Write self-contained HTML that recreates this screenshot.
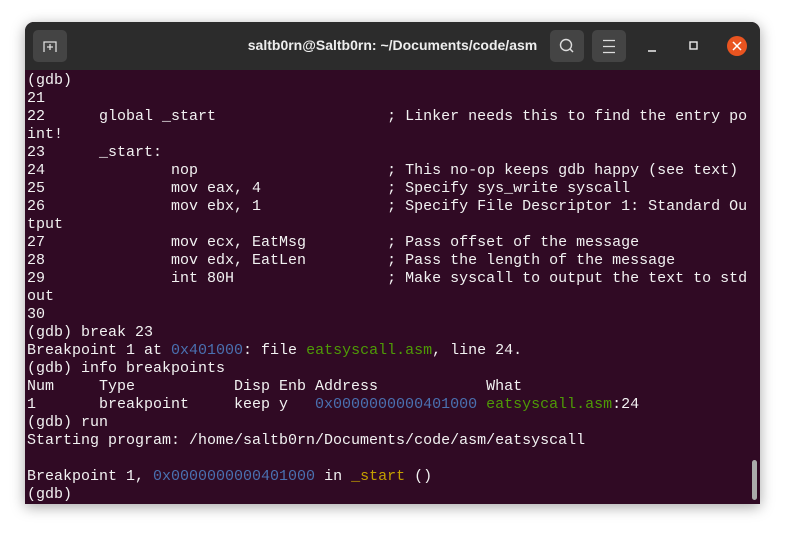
<!DOCTYPE html>
<html><head><style>
body{margin:0;width:786px;height:533px;background:#fff;overflow:hidden;position:relative;font-family:"Liberation Sans",sans-serif}
.win{position:absolute;left:25px;top:22px;width:735px;height:482px;border-radius:9px 9px 0 0;overflow:hidden;box-shadow:0 3px 14px rgba(0,0,0,.35);background:#300a24}
.tb{position:absolute;left:0;top:0;width:735px;height:48px;background:#2c2c2c;}
.btn{position:absolute;top:8px;width:34px;height:32px;border-radius:5px;background:#444}
.title{position:absolute;left:0;width:735px;top:15px;text-align:center;color:#eee;font-weight:bold;font-size:14px}
pre{position:absolute;left:2px;top:50px;margin:0;font-family:"Liberation Mono",monospace;font-size:15px;line-height:18px;color:#f2f2f2;letter-spacing:0}
.b{color:#4a70b0}.g{color:#4e9a06}.y{color:#c4a000}
.sb{position:absolute;right:3px;top:438px;width:5px;height:40px;border-radius:3px;background:#aaa}
</style></head><body>
<div class="win">
<div class="tb">
<div class="btn" style="left:8px"><svg width="34" height="32"><path d="M11 22V12h12v10M17 14v6M14 17h6" stroke="#ddd" stroke-width="1.3" fill="none"/></svg></div>
<div class="title">saltb0rn@Saltb0rn: ~/Documents/code/asm</div>
<div class="btn" style="left:525px"><svg width="34" height="32"><circle cx="16" cy="15" r="5.5" stroke="#ddd" stroke-width="1.4" fill="none"/><path d="M20 19l3 3" stroke="#ddd" stroke-width="1.5"/></svg></div>
<div class="btn" style="left:567px"><svg width="34" height="32"><path d="M11 10.5h12M11 16.5h12M11 22.5h12" stroke="#ddd" stroke-width="1.2"/></svg></div>
<svg style="position:absolute;left:620px;top:12px" width="110" height="26"><path d="M3 17h8" stroke="#eee" stroke-width="1.5"/><rect x="45" y="8" width="7" height="7" stroke="#eee" stroke-width="1.4" fill="none"/><circle cx="92" cy="12" r="10" fill="#e95420"/><path d="M88 8l8 8M96 8l-8 8" stroke="#fff" stroke-width="1.5"/></svg>
</div>
<pre>(gdb) 
21	
22	global _start			; Linker needs this to find the entry po
int!
23	_start:
24		nop			; This no-op keeps gdb happy (see text)
25		mov eax, 4		; Specify sys_write syscall
26		mov ebx, 1		; Specify File Descriptor 1: Standard Ou
tput
27		mov ecx, EatMsg		; Pass offset of the message
28		mov edx, EatLen		; Pass the length of the message
29		int 80H			; Make syscall to output the text to std
out
30	
(gdb) break 23
Breakpoint 1 at <span class="b">0x401000</span>: file <span class="g">eatsyscall.asm</span>, line 24.
(gdb) info breakpoints
Num     Type           Disp Enb Address            What
1       breakpoint     keep y   <span class="b">0x0000000000401000</span> <span class="g">eatsyscall.asm</span>:24
(gdb) run
Starting program: /home/saltb0rn/Documents/code/asm/eatsyscall 

Breakpoint 1, <span class="b">0x0000000000401000</span> in <span class="y">_start</span> ()
(gdb) </pre>
<div class="sb"></div>
</div>
</body></html>
